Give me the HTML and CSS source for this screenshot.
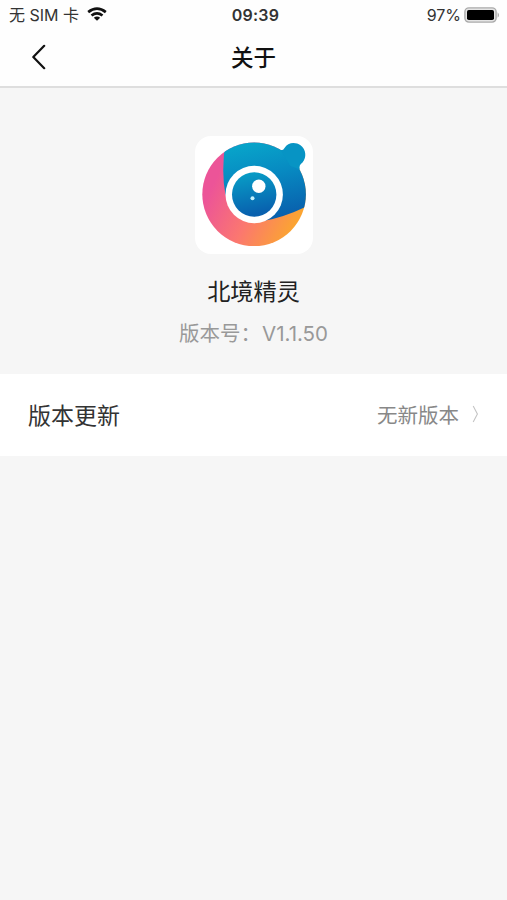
FILE: index.html
```html
<!DOCTYPE html>
<html lang="zh-CN">
<head>
<meta charset="utf-8">
<title>关于</title>
<link rel="stylesheet" href="styles.css">
</head>
<body>
<header class="top">
  <div class="status">
    <div class="carrier"><span>无 SIM 卡</span>
      <svg class="wifi" width="20" height="14" viewBox="0 0 20 14" fill="none" stroke="#111" stroke-width="2.7">
        <path d="M1.2 5.1Q10-1.8 18.8 5.1M4.5 8.5Q10 4.2 15.5 8.5"/>
        <path d="M6.8 10.7Q10 8.2 13.2 10.7L10 13.7Z" fill="#111" stroke="none"/>
      </svg>
    </div>
    <time class="clock">09:39</time>
    <div class="power"><span>97%</span>
      <svg width="36" height="16" viewBox="0 0 36 16">
        <rect x=".9" y=".9" width="31.2" height="14.2" rx="4" fill="#e4e4e4" stroke="#aaa" stroke-width="1.4"/>
        <rect x="3" y="3" width="27" height="10" rx="1.8" fill="#000"/>
        <path d="M33.7 5.2Q36 8 33.7 10.8Z" fill="#999"/>
      </svg>
    </div>
  </div>
  <nav class="nav">
    <svg class="back" width="14" height="26" viewBox="0 0 14 26" fill="none" stroke="#111" stroke-width="2.2" stroke-linecap="round" stroke-linejoin="round"><path d="M12.2 1.8 1.3 13l10.9 11.2"/></svg>
    <h1 class="title">关于</h1>
  </nav>
</header>
<main>
  <section class="about">
    <svg class="logo" width="118" height="118" viewBox="10.5 10 118 118">
      <defs>
        <linearGradient id="warm" gradientUnits="userSpaceOnUse" x1="30" y1="55" x2="112" y2="95">
          <stop offset="0" stop-color="#ec5498"/><stop offset=".5" stop-color="#fb7770"/><stop offset="1" stop-color="#fba432"/>
        </linearGradient>
        <linearGradient id="cool" gradientUnits="userSpaceOnUse" x1="65" y1="16" x2="82" y2="94">
          <stop offset="0" stop-color="#08a5ca"/><stop offset=".45" stop-color="#0789c1"/><stop offset="1" stop-color="#0960ad"/>
        </linearGradient>
        <linearGradient id="lens" x1="0" y1="0" x2=".2" y2="1">
          <stop offset="0" stop-color="#08a2c8"/><stop offset="1" stop-color="#0860ae"/>
        </linearGradient>
        <clipPath id="disc"><circle cx="69.6" cy="68.3" r="51.8"/></clipPath>
      </defs>
      <rect x="10.5" y="10" width="118" height="118" rx="16" fill="#fff"/>
      <circle cx="69.6" cy="68.3" r="51.8" fill="url(#warm)"/>
      <path clip-path="url(#disc)" d="M42 10Q36 43 41 69L76 95.5Q99 92 125 79V10Z" fill="url(#cool)"/>
      <path d="M96 24.2Q99 24.3 100.2 21.7C103 16.4 111 15.6 116 19.2C121.8 23.5 122.3 31.5 118 36.5Q114 39.2 115.3 43.5L106 40Z" fill="#0794c4"/>
      <circle cx="69.7" cy="68.5" r="28.7" fill="#fff"/>
      <circle cx="69.7" cy="68.5" r="22.2" fill="url(#lens)"/>
      <circle cx="74.3" cy="60.3" r="6.7" fill="#fff"/>
      <circle cx="68" cy="72.3" r="2" fill="#c5f1fc"/>
    </svg>
    <h2 class="name">北境精灵</h2>
    <p class="version">版本号：<span class="num">V1.1.50</span></p>
  </section>
  <section class="row">
    <span class="label">版本更新</span>
    <span class="value">无新版本</span>
    <svg class="arrow" width="7" height="18" viewBox="0 0 7 18" fill="none" stroke="#c4c4c4" stroke-width="1.1"><path d="M1.2 1 5.4 9 1.2 17"/></svg>
  </section>
</main>
</body>
</html>
```
FILE: styles.css
```css
* { box-sizing: border-box; }
body {
  margin: 0;
  min-height: 900px;
  background: #f6f6f6;
  color: #222;
  font-family: Inter, "Noto Sans CJK SC", sans-serif;
}
.top {
  height: 88px;
  background: #fefefe;
  border-bottom: 2px solid #dedede;
}
.status {
  height: 29px;
  padding: 0 7px 0 9px;
  display: grid;
  grid-template-columns: 1fr auto 1fr;
  align-items: center;
  font-size: 16px;
  line-height: 30px;
  color: #333;
}
.carrier, .power { display: flex; align-items: center; white-space: nowrap; }
.carrier { gap: 8px; }
.wifi { margin-bottom: 2px; }
.power { justify-content: flex-end; gap: 3px; }
.clock { padding-left: 2px; font-weight: 600; letter-spacing: .2px; }
.nav {
  height: 57px;
  padding: 0 32px;
  display: grid;
  grid-template-columns: 1fr auto 1fr;
  align-items: center;
}
.back { margin-bottom: 2px; }
.title { margin: 0; font-size: 22.5px; line-height: 32px; font-weight: 500; color: #111; }
.about {
  height: 286px;
  padding-top: 48px;
  display: flex;
  flex-direction: column;
  align-items: center;
}
.logo { display: block; }
.name { margin: 21px 0 0; font-size: 23.2px; line-height: 34px; font-weight: 400; }
.version { margin: 11px 0 0; font-size: 20.5px; line-height: 28px; color: #999; white-space: nowrap; }
.num { margin-left: 1px; }
.row {
  height: 82px;
  padding: 0 28px 2px;
  display: flex;
  align-items: center;
  background: #fff;
}
.label { font-size: 23px; color: #333; }
.value { margin-left: auto; font-size: 20.5px; color: #888; }
.arrow { margin-left: 13px; }
```
